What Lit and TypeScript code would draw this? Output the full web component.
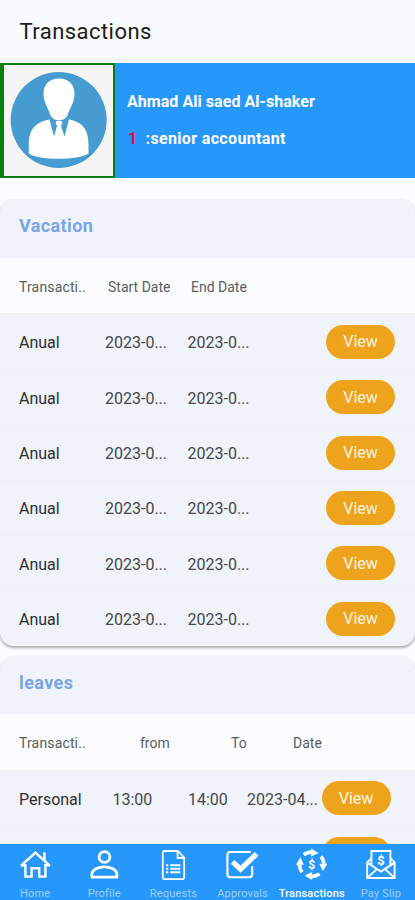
import { LitElement, html, css, svg } from "lit";
import { customElement, property } from "lit/decorators.js";

const ICONS: Record<string, unknown> = {
  home: svg`<g fill="none" stroke="#fff" stroke-width="2.5"><path d="M4.2 18.6 18.4 5.600 32.800 18.600"/><path stroke-width="2.4" d="M3.800 18.200H8.400V29.600H14.600V21.200H22.200V29.600H28.400V18.200H33"/><path d="M27.400 5.400V13"/></g>`,
  profile: svg`<g fill="none" stroke="#fff" stroke-width="2.8"><circle cx="18.5" cy="10" r="5.4"/><path stroke-linejoin="round" d="M5.900 30.200V27.400C5.900 22.400 12.500 19.800 18.400 19.800S30.900 22.400 30.900 27.400V30.200Z"/></g>`,
  requests: svg`<g fill="none" stroke="#fff" stroke-width="1.800" stroke-linejoin="round"><path d="M9.800 4H23L29.200 10.600V30Q29.200 32.200 27 32.200H9.800Q7.800 32.200 7.800 30V6Q7.800 4 9.800 4Z"/><path d="M22.600 4.400V11H29"/><path stroke-width="2" d="M11 18.200H13.300M15.300 18.200H25.300M11 21.700H13.300M15.300 21.700H25.300M11 25.200H13.300M15.300 25.200H25.300"/></g>`,
  approvals: svg`<g fill="none" stroke="#fff"><path stroke-width="2.100" stroke-linecap="round" d="M26 5H6.400Q3.400 5 3.400 8V27.200Q3.400 30.200 6.400 30.200H25.200Q28.200 30.200 28.200 27.200V20"/><path stroke-width="5.200" d="M8.600 14.800 16.600 22.200 32.600 6.800"/></g>`,
  transactions: svg`<g transform="translate(18.6 17.3)">${[0, 90, 180, 270].map(
    (a) => svg`<g transform="rotate(${a})"><path d="M-7.800 -9.400A12.200 12.200 0 0 1 0 -12.200" fill="none" stroke="#fff" stroke-width="3.600"/><path d="M-.5 -15.700 7 -11.200 -.5 -7.800Z" fill="#fff"/></g>`
  )}<text y="4.300" text-anchor="middle" font-size="12" font-weight="700" fill="#fff">$</text></g>`,
  payslip: svg`<g fill="none" stroke="#fff" stroke-width="1.900"><path d="M9.400 18V4H28.400V18"/><path d="M9 11.600 5.200 15.400V31H32.600V15.400L28.800 11.600M5.200 15.600 18.900 24.600 32.600 15.600M5.600 30.600 14.600 22.200M32.200 30.600 23.200 22.200"/></g><text x="18.9" y="18.2" text-anchor="middle" font-size="13" font-weight="700" fill="#fff">$</text>`,
};

@customElement("nav-item")
class NavItem extends LitElement {
  @property() icon = "";
  @property() label = "";
  @property({ type: Boolean }) active = false;
  static styles = css`
    :host { flex: 1 1 0; min-width: 0; display: flex; flex-direction: column; align-items: center; padding-top: 3px; }
    svg { width: 36px; height: 36px; display: block; flex: none; }
    .label { font-size: 11px; line-height: 14px; margin-top: 3.5px; padding-left: 1px; color: #9fd0fe; white-space: nowrap; letter-spacing: 0.2px; }
    .active { color: #fff; font-weight: 500; }
  `;
  render() {
    return html`<svg viewBox="0 0 36 36">${ICONS[this.icon]}</svg>
      <div class="label ${this.active ? "active" : ""}">${this.label}</div>`;
  }
}

@customElement("app-root")
class AppRoot extends LitElement {
  static styles = css`
    :host { display: flex; flex-direction: column; height: 900px; overflow: hidden; background: #fafcff; font-family: Roboto, sans-serif; color: #44474d; }
    .bar { height: 63px; flex: none; box-sizing: border-box; display: flex; align-items: center; padding: 0 0 0 19.5px; font-size: 22px; letter-spacing: 0.45px; color: #1b1c1e; background: #fafbfe; }
    .banner { height: 115px; flex: none; display: flex; background: #2798fb; color: #fff; font-weight: 700; font-size: 16px; }
    .avatar { box-sizing: border-box; width: 115px; height: 115px; border: 2px solid #078010; border-left-width: 4px; background: #f5f5f6; }
    .avatar svg { display: block; width: 109px; height: 111px; }
    .who { padding: 21px 0 0 12px; line-height: 36.5px; white-space: pre; letter-spacing: 0.05px; }
    .job { letter-spacing: 0.35px; }
    .num { color: #d9143c; margin: 0 8px 0 1px; }
    .content { flex: 1; min-height: 0; overflow: hidden; padding-top: 21px; }
    .card { border-radius: 14px; overflow: hidden; background: #f0f3f9; box-shadow: 0 2px 3px rgba(0, 0, 0, 0.32); margin-bottom: 10px; }
    .title { height: 59px; box-sizing: border-box; padding: 15px 0 0 19px; font-size: 18px; line-height: 23px; font-weight: 700; color: #76a6e8; letter-spacing: 0.4px; }
    .title.short { height: 58px; }
    .row { height: 55.3px; box-sizing: border-box; display: grid; align-items: center; padding-left: 19px; border-top: 1px solid #edf0f5; font-size: 16px; white-space: nowrap; }
    .row > span { padding-top: 1.5px; }
    .head { background: #fbfcfe; font-size: 14px; color: #5a5c60; border-top: 0; border-bottom: 1px solid #eef0f4; height: 56px; }
    .row.head > span { padding-top: 3px; }
    .head > span:first-child { letter-spacing: 0.15px; }
    .first { border-top: 0; }
    .vac { grid-template-columns: 86px 82.5px 138.5px 69px; }
    .vac.head { grid-template-columns: 89px 83px 100px; }
    .lv { grid-template-columns: 93.5px 75.5px 59px 74.5px 69px; }
    .lv.head { grid-template-columns: 121px 91px 62px 60px; height: 57px; }
    .kind { color: #2b2e33; }
    .row > .view { height: 34px; padding: 0; border-radius: 17px; background: #eea31d; color: #fff6e2; font-size: 16px; display: flex; align-items: center; justify-content: center; }
    .nav { height: 56px; flex: none; display: flex; background: #2798fb; overflow: hidden; }
  `;
  render() {
    return html`
      <div class="bar">Transactions</div>
      <div class="banner">
        <div class="avatar">
          <svg viewBox="4 65 109 111">
            <circle cx="58.7" cy="120" r="48" fill="#469bd0" />
            <path fill="#fff" d="M59 78.500C69 78.500 74.500 85 74.500 93.500C74.500 102 70 108 67.800 114.500C66.500 118.500 63 120.300 59 120.300S51.500 118.500 50.200 114.500C48 108 43.500 102 43.500 93.500C43.500 85 49 78.500 59 78.500Z" />
            <path fill="#fff" d="M49.500 119.200 54 136.500 57 126 55.500 123 56.500 121H61.500L62.500 123 61 126 64.500 136.500 69 119.200C81 122.500 88.500 127 88.500 145V153.500C79 160.500 38 160.500 28.800 153.500V145C28.800 127 37 122.500 49.500 119.200Z" />
            <path fill="#fff" d="M57.300 126H60.700L62.500 134.500 59 138 55.500 134.500Z" />
          </svg>
        </div>
        <div class="who"><div>Ahmad Ali saed Al-shaker</div><div class="job"><span class="num">1</span>:senior accountant</div></div>
      </div>
      <div class="content">
        <div class="card">
          <div class="title">Vacation</div>
          <div class="row head vac"><span>Transacti..</span><span>Start Date</span><span>End Date</span></div>
          ${[0, 1, 2, 3, 4, 5].map(
            (i) => html`<div class="row vac ${i ? "" : "first"}">
              <span class="kind">Anual</span><span>2023-0...</span><span>2023-0...</span><span class="view">View</span>
            </div>`
          )}
        </div>
        <div class="card">
          <div class="title short">leaves</div>
          <div class="row head lv"><span>Transacti..</span><span>from</span><span>To</span><span>Date</span></div>
          <div class="row lv first">
            <span class="kind">Personal</span><span>13:00</span><span>14:00</span><span>2023-04...</span><span class="view">View</span>
          </div>
          <div class="row lv">
            <span></span><span></span><span></span><span></span><span class="view"></span>
          </div>
        </div>
      </div>
      <div class="nav">
        <nav-item icon="home" label="Home"></nav-item>
        <nav-item icon="profile" label="Profile"></nav-item>
        <nav-item icon="requests" label="Requests"></nav-item>
        <nav-item icon="approvals" label="Approvals"></nav-item>
        <nav-item icon="transactions" label="Transactions" active></nav-item>
        <nav-item icon="payslip" label="Pay Slip"></nav-item>
      </div>
    `;
  }
}
